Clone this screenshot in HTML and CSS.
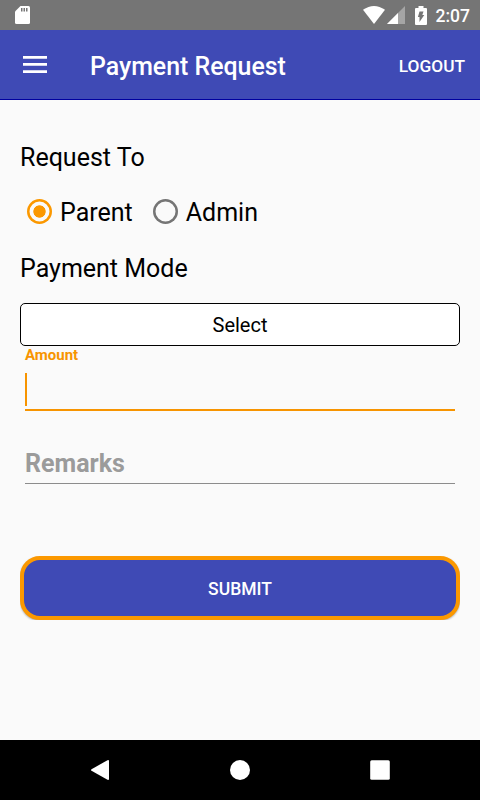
FILE: index.html
```
<!DOCTYPE html>
<html lang="en">
<head>
    <meta charset="UTF-8">
    <meta name="viewport" content="width=device-width, initial-scale=1.0">
    <title>Payment Request</title>
    <link rel="stylesheet" href="styles.css">
</head>
<body>

    <div class="status-bar">
        <svg class="sd-card" width="15" height="18" viewBox="0 0 15 18">
            <path fill="#fff" d="M5.5 0H13.5Q15 0 15 1.5V16.500Q15 18 13.500 18H1.500Q0 18 0 16.500V5.500z"/>
            <path fill="#757575" d="M6 2h1.500v3.500H6zM8.500 2H10v3.500H8.500zM11 2h1.500v3.500H11z"/>
        </svg>
        <div class="status-icons">
            <svg class="wifi" width="22" height="18" viewBox="0 0 22 18">
                <path fill="#fff" d="M0 3.800Q11 -3.800 22 3.800L11 18z"/>
            </svg>
            <svg class="signal" width="18" height="18" viewBox="0 0 18 18">
                <path fill="#a5a5a5" d="M18 0V18H0z"/>
                <path fill="#fff" d="M11 7V18H0z"/>
            </svg>
            <svg class="battery" width="12" height="19" viewBox="0 0 12 19">
                <path fill="#fff" d="M3.500 0h5v2H11q1 0 1 1v15q0 1-1 1H1q-1 0-1-1V3q0-1 1-1h2.500z"/>
                <path fill="#757575" d="M4.500 5.500H8.500L7.300 9H9.300L4.500 16V11H2.900z"/>
            </svg>
            <span class="clock">2:07</span>
        </div>
    </div>

    <header class="toolbar">
        <svg class="menu" width="24" height="17" viewBox="0 0 24 17">
            <path fill="#fff" d="M0 0h24v2.700H0zM0 7.100h24v2.700H0zM0 14.200h24v2.700H0z"/>
        </svg>
        <h1>Payment Request</h1>
        <span class="logout">LOGOUT</span>
    </header>

    <main class="container">
        <h2>Request To</h2>
        <div class="radio-group">
            <label><input type="radio" name="requestTo" checked>Parent</label>
            <label><input type="radio" name="requestTo">Admin</label>
        </div>

        <h2>Payment Mode</h2>
        <button class="select">Select</button>

        <div class="field active">
            <span class="hint">Amount</span>
            <div class="input"><span class="cursor"></span></div>
        </div>
        <div class="field remarks">
            <div class="input">Remarks</div>
        </div>

        <button class="submit">SUBMIT</button>
    </main>

    <footer class="nav-bar">
        <svg width="20" height="20" viewBox="0 0 20 20">
            <path fill="#fff" d="M1.500 9.200L17.500 .2Q19 -.2 19 1V19Q19 20.200 17.500 19.800L1.500 10.800Q.5 10 1.500 9.200z"/>
        </svg>
        <svg width="20" height="20" viewBox="0 0 20 20">
            <circle cx="10" cy="10" r="10" fill="#fff"/>
        </svg>
        <svg width="20" height="20" viewBox="0 0 20 20">
            <rect x=".2" y=".2" width="19.600" height="19.600" rx="1.500" fill="#fff"/>
        </svg>
    </footer>

</body>
</html>
```
FILE: styles.css
```
* {
    box-sizing: border-box;
}
body {
    font-family: Roboto, sans-serif;
    margin: 0;
    height: 800px;
    display: flex;
    flex-direction: column;
    background-color: #fafafa;
    color: #000;
    overflow: hidden;
}
svg {
    display: block;
    flex-shrink: 0;
}
.status-bar {
    height: 30px;
    padding: 0 10px 0 15px;
    display: flex;
    align-items: center;
    justify-content: space-between;
    background-color: #757575;
    color: white;
}
.status-icons {
    display: flex;
    align-items: center;
}
.signal {
    margin-left: 2px;
}
.battery {
    margin-left: 10px;
}
.clock {
    margin-left: 9px;
    font-size: 17.500px;
    font-weight: 500;
    line-height: 30px;
    padding-top: 2px;
}
.toolbar {
    height: 70px;
    padding: 3px 15px 0 23px;
    display: flex;
    align-items: center;
    background-color: #3f4ab5;
    border-bottom: 1px solid #0000a0;
    color: white;
}
h1 {
    flex: 1;
    margin: 0 0 0 43px;
    font-size: 24.900px;
    font-weight: 500;
}
.menu {
    margin-top: -4px;
}
.logout {
    font-size: 17.300px;
    font-weight: 500;
}
.container {
    flex: 1;
    padding: 43px 20px 0;
}
h2 {
    margin: 0;
    font-size: 25px;
    font-weight: 400;
    line-height: 30px;
}
.radio-group {
    display: flex;
    gap: 20px;
    height: 40px;
    margin: 19px 0 22px;
    padding-left: 7px;
}
.radio-group label {
    display: flex;
    align-items: center;
    font-size: 25px;
}
input[type="radio"] {
    appearance: none;
    width: 25px;
    height: 25px;
    margin: -2px 8px 0 0;
    border-radius: 50%;
    box-shadow: inset 0 0 0 2.500px #757575;
}
input[type="radio"]:checked {
    box-shadow: inset 0 0 0 2.500px #fb9800;
    background: radial-gradient(circle, #fb9800 5.800px, transparent 6.500px);
}
.select {
    display: block;
    width: 100%;
    height: 43px;
    margin-top: 19px;
    padding: 1px 0 0;
    background-color: white;
    border: 1px solid #000;
    border-radius: 5px;
    font-family: inherit;
    font-size: 20px;
    color: #000;
}
.field {
    margin: 0 5px;
}
.hint {
    display: block;
    height: 27px;
    font-size: 15px;
    font-weight: 700;
    line-height: 18px;
    color: #f79400;
}
.input {
    height: 39px;
    border-bottom: 1px solid #8c8c8c;
    font-size: 25px;
    font-weight: 700;
    line-height: 37px;
    color: #9b9b9b;
}
.active .input {
    height: 38px;
    border-bottom: 2px solid #f79400;
}
.cursor {
    display: block;
    width: 2px;
    height: 33px;
    background-color: #f79400;
}
.remarks {
    margin-top: 34px;
}
.submit {
    display: block;
    width: 100%;
    height: 64px;
    margin-top: 72px;
    padding: 2px 0 0;
    background-color: #3f4ab5;
    border: 4px solid #fb9800;
    border-radius: 20px;
    box-shadow: 0 1px 2px rgba(0, 0, 0, 0.3);
    clip-path: inset(0);
    font-family: inherit;
    font-size: 17.500px;
    font-weight: 500;
    color: white;
}
.nav-bar {
    height: 60px;
    padding: 0 90px;
    display: flex;
    align-items: center;
    justify-content: space-between;
    background-color: #000;
}
```
